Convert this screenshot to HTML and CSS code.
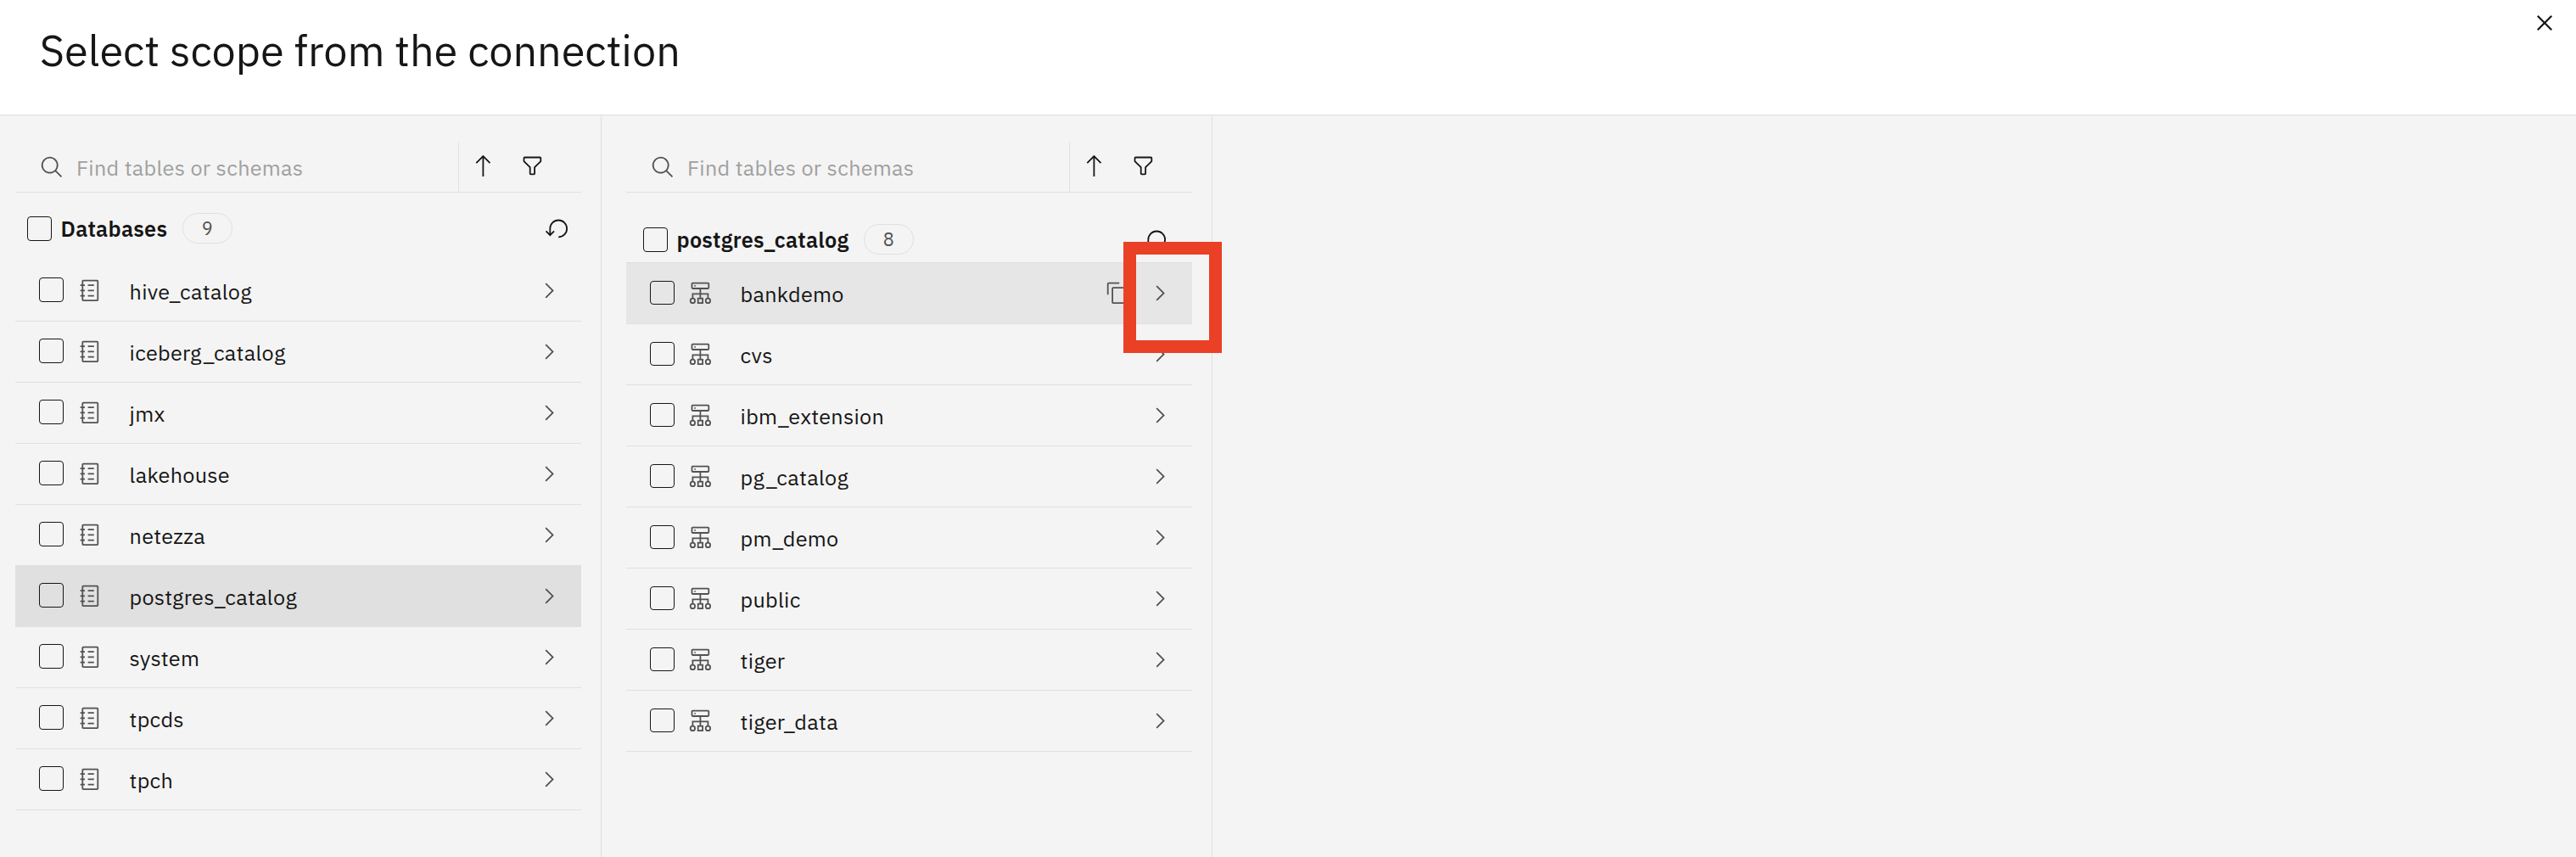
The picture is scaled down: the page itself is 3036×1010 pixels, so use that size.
FILE: index.html
```html
<!DOCTYPE html>
<html lang="en">
<head>
<meta charset="utf-8">
<title>Select scope from the connection</title>
<link rel="stylesheet" href="styles.css">
</head>
<body>
<svg class="sprite" aria-hidden="true">
  <symbol id="search" viewBox="0 0 32 32"><path d="M29,27.5859l-7.5521-7.5521a11.0177,11.0177,0,1,0-1.4141,1.4141L27.5859,29ZM4,13a9,9,0,1,1,9,9A9.01,9.01,0,0,1,4,13Z"/></symbol>
  <symbol id="arrow-up" viewBox="0 0 32 32"><path d="M16 2 6.3 11.7 7.7 13.1 15 5.8V30h2V5.8l7.3 7.3 1.4-1.4Z"/></symbol>
  <symbol id="filter" viewBox="0 0 32 32"><path d="M18,28H14a2,2,0,0,1-2-2V18.41L4.59,11A2,2,0,0,1,4,9.59V6A2,2,0,0,1,6,4H26a2,2,0,0,1,2,2V9.59A2,2,0,0,1,27.41,11L20,18.41V26A2,2,0,0,1,18,28ZM6,6V9.59l8,8V26h4V17.59l8-8V6Z"/></symbol>
  <symbol id="reset" viewBox="0 0 32 32"><path d="M18,28A12,12,0,1,0,6,16v6.2L2.4,18.6,1,20l6,6,6-6-1.4-1.4L8,22.2V16A10,10,0,1,1,18,26Z"/></symbol>
  <symbol id="catalog" viewBox="0 0 32 32"><path d="M26,2H8A2,2,0,0,0,6,4V8H4v2H6v5H4v2H6v5H4v2H6v4a2,2,0,0,0,2,2H26a2,2,0,0,0,2-2V4A2,2,0,0,0,26,2Zm0,26H8V24h2V22H8V17h2V15H8V10h2V8H8V4H26Z"/><path d="M14 8h8v2h-8zM14 15h8v2h-8zM14 22h8v2h-8z"/></symbol>
  <symbol id="schema" viewBox="0 0 32 32"><g fill="none" stroke="currentColor" stroke-width="2"><rect x="5" y="3" width="22" height="7" rx="1"/><path d="M16 10v13M6 23v-6h20v6"/><circle cx="6" cy="26" r="3"/><rect x="13" y="23" width="6" height="6"/><circle cx="26" cy="26" r="3"/></g><circle cx="9" cy="6.6" r="1"/></symbol>
  <symbol id="copy" viewBox="0 0 32 32"><path d="M28,10V28H10V10H28m0-2H10a2,2,0,0,0-2,2V28a2,2,0,0,0,2,2H28a2,2,0,0,0,2-2V10a2,2,0,0,0-2-2Z"/><path d="M4,18H2V4A2,2,0,0,1,4,2H18V4H4Z"/></symbol>
  <symbol id="chevron" viewBox="0 0 32 32"><path d="M22 16 12 26 10.6 24.6 19.2 16 10.6 7.4 12 6Z"/></symbol>
  <symbol id="close" viewBox="0 0 32 32"><path d="M24 9.4 22.6 8 16 14.6 9.4 8 8 9.4 14.6 16 8 22.6 9.4 24 16 17.4 22.6 24 24 22.6 17.4 16Z"/></symbol>
</svg>

<header class="header">
  <h1 class="title">Select scope from the connection</h1>
  <svg class="close"><use href="#close"/></svg>
</header>

<main class="columns">
  <section class="column column-databases">
    <div class="toolbar">
      <div class="search"><svg class="icon muted"><use href="#search"/></svg><span class="placeholder">Find tables or schemas</span></div>
      <div class="actions"><svg class="icon"><use href="#arrow-up"/></svg><svg class="icon"><use href="#filter"/></svg></div>
    </div>
    <div class="heading"><span class="checkbox"></span><h2 class="name">Databases</h2><span class="count">9</span><svg class="icon reset"><use href="#reset"/></svg></div>
    <ul class="list">
      <li class="row"><span class="checkbox"></span><svg class="icon muted"><use href="#catalog"/></svg><span class="label">hive_catalog</span><svg class="icon muted"><use href="#chevron"/></svg></li>
      <li class="row"><span class="checkbox"></span><svg class="icon muted"><use href="#catalog"/></svg><span class="label">iceberg_catalog</span><svg class="icon muted"><use href="#chevron"/></svg></li>
      <li class="row"><span class="checkbox"></span><svg class="icon muted"><use href="#catalog"/></svg><span class="label">jmx</span><svg class="icon muted"><use href="#chevron"/></svg></li>
      <li class="row"><span class="checkbox"></span><svg class="icon muted"><use href="#catalog"/></svg><span class="label">lakehouse</span><svg class="icon muted"><use href="#chevron"/></svg></li>
      <li class="row"><span class="checkbox"></span><svg class="icon muted"><use href="#catalog"/></svg><span class="label">netezza</span><svg class="icon muted"><use href="#chevron"/></svg></li>
      <li class="row selected"><span class="checkbox"></span><svg class="icon muted"><use href="#catalog"/></svg><span class="label">postgres_catalog</span><svg class="icon muted"><use href="#chevron"/></svg></li>
      <li class="row"><span class="checkbox"></span><svg class="icon muted"><use href="#catalog"/></svg><span class="label">system</span><svg class="icon muted"><use href="#chevron"/></svg></li>
      <li class="row"><span class="checkbox"></span><svg class="icon muted"><use href="#catalog"/></svg><span class="label">tpcds</span><svg class="icon muted"><use href="#chevron"/></svg></li>
      <li class="row"><span class="checkbox"></span><svg class="icon muted"><use href="#catalog"/></svg><span class="label">tpch</span><svg class="icon muted"><use href="#chevron"/></svg></li>
    </ul>
  </section>

  <section class="column column-schemas">
    <div class="toolbar">
      <div class="search"><svg class="icon muted"><use href="#search"/></svg><span class="placeholder">Find tables or schemas</span></div>
      <div class="actions"><svg class="icon"><use href="#arrow-up"/></svg><svg class="icon"><use href="#filter"/></svg></div>
    </div>
    <div class="heading"><span class="checkbox"></span><h2 class="name">postgres_catalog</h2><span class="count">8</span><svg class="icon reset"><use href="#reset"/></svg></div>
    <ul class="list">
      <li class="row hovered"><span class="checkbox"></span><svg class="icon muted"><use href="#schema"/></svg><span class="label">bankdemo</span><svg class="icon muted copy"><use href="#copy"/></svg><svg class="icon muted"><use href="#chevron"/></svg><span class="highlight"></span></li>
      <li class="row"><span class="checkbox"></span><svg class="icon muted"><use href="#schema"/></svg><span class="label">cvs</span><svg class="icon muted"><use href="#chevron"/></svg></li>
      <li class="row"><span class="checkbox"></span><svg class="icon muted"><use href="#schema"/></svg><span class="label">ibm_extension</span><svg class="icon muted"><use href="#chevron"/></svg></li>
      <li class="row"><span class="checkbox"></span><svg class="icon muted"><use href="#schema"/></svg><span class="label">pg_catalog</span><svg class="icon muted"><use href="#chevron"/></svg></li>
      <li class="row"><span class="checkbox"></span><svg class="icon muted"><use href="#schema"/></svg><span class="label">pm_demo</span><svg class="icon muted"><use href="#chevron"/></svg></li>
      <li class="row"><span class="checkbox"></span><svg class="icon muted"><use href="#schema"/></svg><span class="label">public</span><svg class="icon muted"><use href="#chevron"/></svg></li>
      <li class="row"><span class="checkbox"></span><svg class="icon muted"><use href="#schema"/></svg><span class="label">tiger</span><svg class="icon muted"><use href="#chevron"/></svg></li>
      <li class="row"><span class="checkbox"></span><svg class="icon muted"><use href="#schema"/></svg><span class="label">tiger_data</span><svg class="icon muted"><use href="#chevron"/></svg></li>
    </ul>
  </section>
</main>
</body>
</html>
```
FILE: styles.css
```css
* { box-sizing: border-box; }

body {
  margin: 0;
  height: 1010px;
  display: flex;
  flex-direction: column;
  overflow: hidden;
  background: #f4f4f4;
  color: #161616;
  font-family: "IBM Plex Sans", "Noto Sans", sans-serif;
  font-size: 25.2px;
  letter-spacing: 0.288px;
}

.sprite { display: none; }

.header {
  height: 136px;
  flex: none;
  display: flex;
  justify-content: space-between;
  align-items: flex-start;
  padding: 8.8px 19.2px 0 46.8px;
  background: #fff;
  border-bottom: 1px solid #e0e0e0;
}

.title {
  margin: 15.2px 0 0;
  font-size: 50.4px;
  line-height: 70px;
  font-weight: 400;
  letter-spacing: 0;
}

.close { width: 36px; height: 36px; fill: #161616; }

.columns { flex: 1; display: flex; min-height: 0; }

.column {
  border-right: 1px solid #e0e0e0;
  padding-top: 32px;
  padding-right: 23px;
}
.column-databases { width: 709px; padding-left: 18px; }
.column-schemas { width: 720px; padding-left: 29px; }

.toolbar {
  height: 59px;
  display: flex;
  border-bottom: 1px solid #e0e0e0;
}
.search {
  width: 522px;
  display: flex;
  align-items: center;
  gap: 14px;
  padding-left: 29.2px;
}
.placeholder { color: #a0a0a0; }
.actions {
  flex: 1;
  display: flex;
  align-items: center;
  gap: 29.3px;
  padding: 0 0 3px 14px;
  border-left: 1px solid #e0e0e0;
}

.icon {
  width: 28.8px;
  height: 28.8px;
  flex: none;
  fill: #161616;
  color: #161616;
}
.muted { fill: #525252; color: #525252; }

.checkbox {
  width: 29px;
  height: 29px;
  flex: none;
  border: 1px solid #161616;
  border-radius: 4px;
}

.heading { display: flex; align-items: center; }
.column-databases .heading { height: 80px; padding: 4px 14px 0; }
.column-schemas .heading { height: 82px; padding: 28px 29px 0 20px; }

.name {
  margin: 0 0 0 10.5px;
  font-size: 25.2px;
  font-weight: 600;
}
.count {
  width: 59px;
  height: 36px;
  margin-left: 17.5px;
  border: 1px solid #e0e0e0;
  border-radius: 18px;
  color: #525252;
  font-size: 21.6px;
  line-height: 34px;
  text-align: center;
}
.reset { margin-left: auto; }

.list { margin: 0; padding: 0; list-style: none; }
.column-schemas .list { border-top: 1px solid #e0e0e0; }

.row {
  position: relative;
  height: 72px;
  display: flex;
  align-items: center;
  padding: 0 23px 0 28px;
  border-bottom: 1px solid #e0e0e0;
}
.row .checkbox { margin: 0 15.6px 2px 0; }
.column-schemas .row .checkbox { height: 28px; margin-bottom: 1px; }
.row .label { flex: 1; margin-left: 33.2px; padding-top: 2px; }
.selected { background: #e0e0e0; }
.hovered { background: #e6e6e6; }
.copy { margin-right: 21.4px; }

.highlight {
  position: absolute;
  top: -25px;
  right: -35px;
  width: 116px;
  height: 131px;
  border: 15px solid #ea4026;
  z-index: 1;
}
```
